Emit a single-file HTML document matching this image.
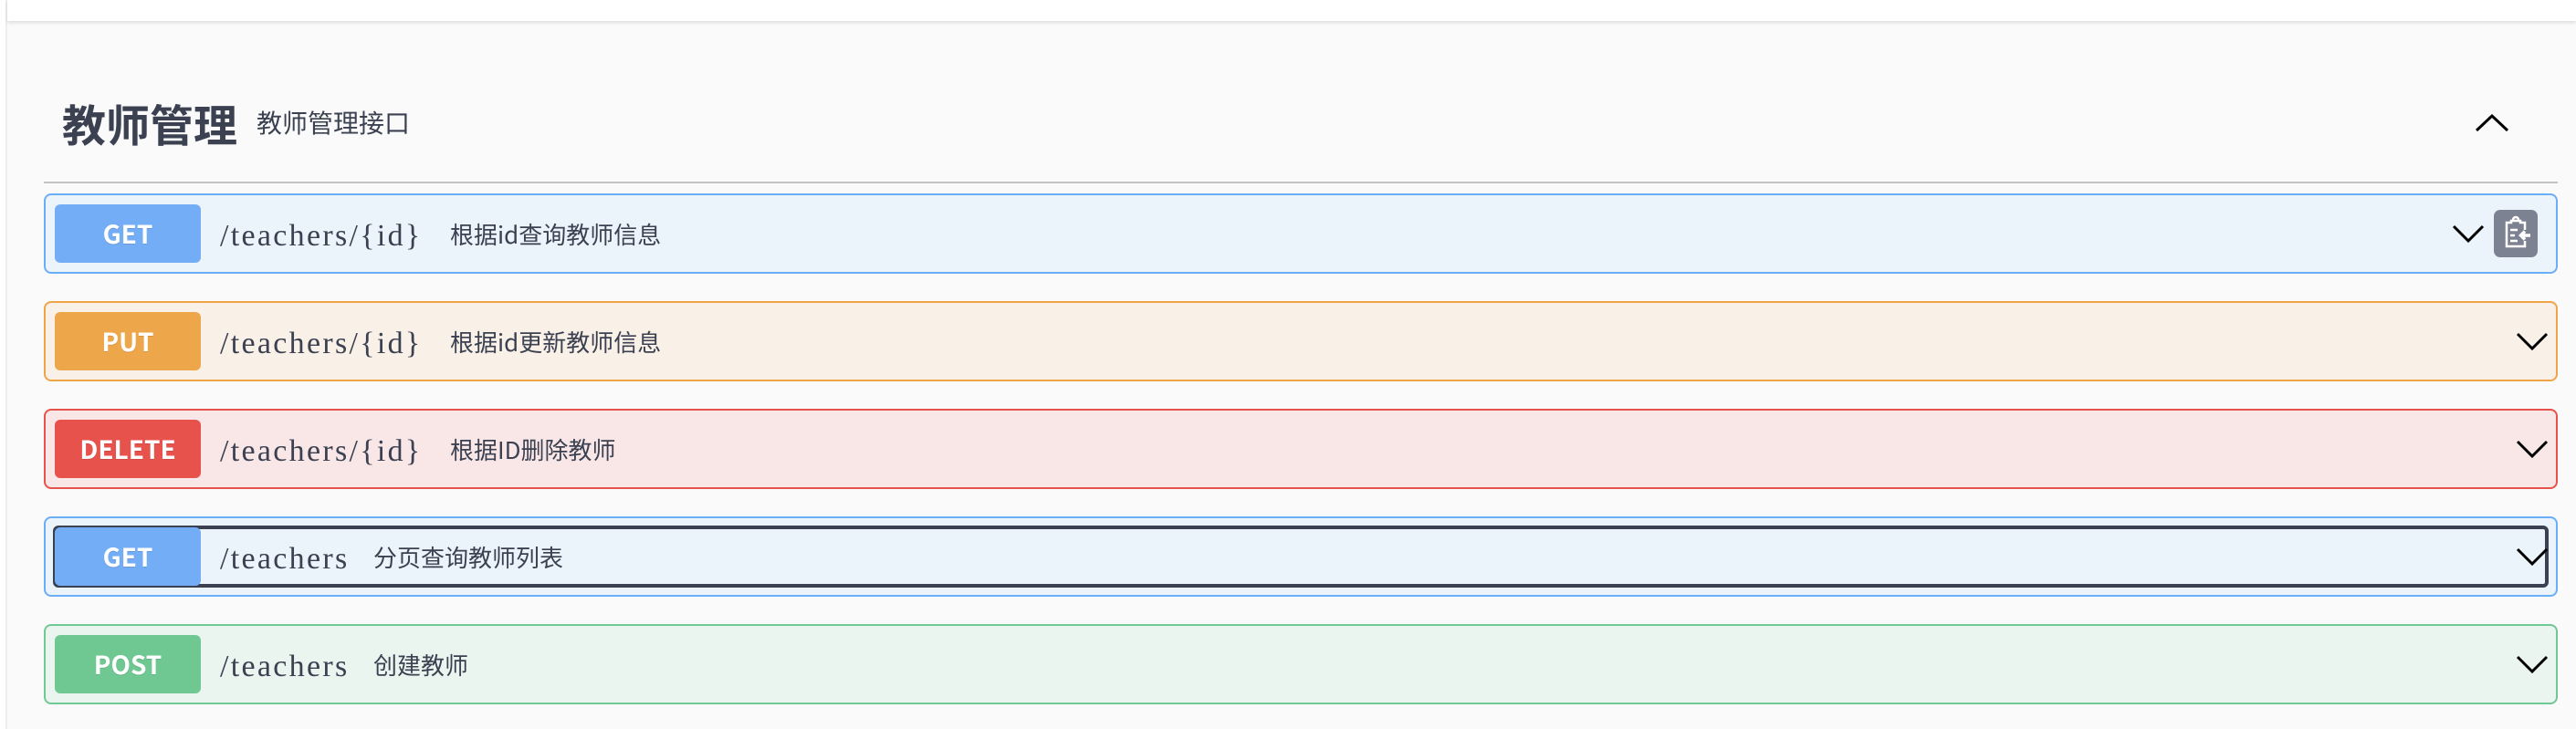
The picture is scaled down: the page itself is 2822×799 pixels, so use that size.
<!DOCTYPE html>
<html><head><meta charset="utf-8"><style>
*{margin:0;padding:0;box-sizing:border-box}
body{width:2822px;height:799px;background:#fafafa;position:relative;overflow:hidden;font-family:"Liberation Sans","Noto Sans CJK SC",sans-serif;color:#3b4151}
.top{position:absolute;left:8px;top:0;width:2814px;height:23px;background:#fff;box-shadow:0 2px 4px rgba(0,0,0,.12)}
.lft{position:absolute;left:0;top:0;width:8px;height:799px;background:#fff;border-right:2px solid #eee}
h1{position:absolute;left:68px;top:104px;font-size:48px;font-weight:bold;font-family:"Noto Sans CJK SC",sans-serif;line-height:60px}
.sub{position:absolute;left:281px;top:114px;font-size:28px;font-family:"Noto Sans CJK SC",sans-serif;line-height:40px}
.hr{position:absolute;left:48px;top:199px;width:2754px;height:2px;background:#c4c4c8}
.op{position:absolute;left:48px;width:2754px;height:88px;border:2px solid;border-radius:8px}
.badge{position:absolute;left:10px;top:10px;width:160px;height:64px;border-radius:6px;color:#fff;font-weight:bold;font-size:28px;text-align:center;line-height:64px;font-family:"Noto Sans CJK SC",sans-serif;text-shadow:0 1px 0 rgba(0,0,0,.1)}
.path{position:absolute;left:191px;top:25px;font-family:"Liberation Serif",serif;font-size:34px;letter-spacing:2.3px;line-height:40px;color:#3b4151}
.desc{position:absolute;top:25px;font-size:26px;font-family:"Noto Sans CJK SC",sans-serif;line-height:36px;color:#3b4151}
.chev{position:absolute;top:30px;width:36px;height:24px}
</style></head><body>
<div class="lft"></div><div class="top"></div>
<h1>教师管理</h1><div class="sub">教师管理接口</div>
<svg style="position:absolute;left:2711px;top:122px" width="38" height="24" viewBox="0 0 38 24"><path d="M2 21 L19 5 L36 21" fill="none" stroke="#000" stroke-width="3"/></svg>
<div class="hr"></div>

<div class="op" style="top:212px;border-color:#6aaef8;background:#ebf3fb">
<div class="badge" style="background:#73adf5">GET</div>
<div class="path">/teachers/{id}</div><div class="desc" style="left:443px">根据id查询教师信息</div>
<svg class="chev" style="left:2636px" viewBox="0 0 36 24"><path d="M2 4 L18 20 L34 4" fill="none" stroke="#000" stroke-width="3"/></svg>
<div style="position:absolute;left:2682px;top:16px;width:48px;height:52px;border-radius:7px;background:#7d8293">
<svg width="48" height="52" viewBox="0 0 48 52"><path d="M34 22 V14 H29 V12 H19 V14 H14 V40 H34 V34" fill="none" stroke="#fff" stroke-width="2.5"/><path d="M21 11 a3 3 0 0 1 6 0" fill="none" stroke="#fff" stroke-width="2.5"/><path d="M18 22 H26 M18 28 H23 M18 34 H26" stroke="#fff" stroke-width="2.5"/><path d="M40 28 H30 M34 23.5 L29.5 28 L34 32.5" fill="none" stroke="#fff" stroke-width="3.5"/></svg></div>
</div>

<div class="op" style="top:330px;border-color:#efa547;background:#f9f0e7">
<div class="badge" style="background:#eea64a">PUT</div>
<div class="path">/teachers/{id}</div><div class="desc" style="left:443px">根据id更新教师信息</div>
<svg class="chev" style="left:2706px" viewBox="0 0 36 24"><path d="M2 4 L18 20 L34 4" fill="none" stroke="#000" stroke-width="3"/></svg>
</div>

<div class="op" style="top:448px;border-color:#e8524c;background:#f9e7e7">
<div class="badge" style="background:#e8524c">DELETE</div>
<div class="path">/teachers/{id}</div><div class="desc" style="left:443px">根据ID删除教师</div>
<svg class="chev" style="left:2706px" viewBox="0 0 36 24"><path d="M2 4 L18 20 L34 4" fill="none" stroke="#000" stroke-width="3"/></svg>
</div>

<div class="op" style="top:566px;border-color:#6aaef8;background:#ebf3fb">
<div style="position:absolute;left:8px;top:8px;width:2734px;height:68px;border:4px solid #3b4151;border-radius:6px"></div>
<div class="badge" style="background:#73adf5">GET</div>
<div class="path">/teachers</div><div class="desc" style="left:359px">分页查询教师列表</div>
<svg class="chev" style="left:2706px" viewBox="0 0 36 24"><path d="M2 4 L18 20 L34 4" fill="none" stroke="#000" stroke-width="3"/></svg>
</div>

<div class="op" style="top:684px;border-color:#70c894;background:#ebf5ef">
<div class="badge" style="background:#6fc791">POST</div>
<div class="path">/teachers</div><div class="desc" style="left:359px">创建教师</div>
<svg class="chev" style="left:2706px" viewBox="0 0 36 24"><path d="M2 4 L18 20 L34 4" fill="none" stroke="#000" stroke-width="3"/></svg>
</div>
</body></html>
